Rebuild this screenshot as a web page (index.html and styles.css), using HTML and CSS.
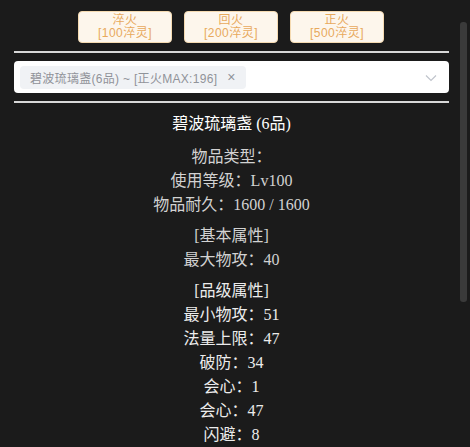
FILE: index.html
```html
<!DOCTYPE html>
<html>
<head>
<meta charset="utf-8">
<link rel="stylesheet" href="styles.css">
</head>
<body>
<div class="page">
  <div class="btns">
    <div class="btn"><span>淬火</span><span>[100淬灵]</span></div>
    <div class="btn"><span>回火</span><span>[200淬灵]</span></div>
    <div class="btn"><span>正火</span><span>[500淬灵]</span></div>
  </div>
  <div class="rule"></div>
  <div class="select">
    <div class="tag"><span>碧波琉璃盏(6品) ~ [正火MAX:196]</span><span class="x">×</span></div>
    <svg class="chev" width="12" height="8" viewBox="0 0 12 8"><path d="M1 1.5 L6 6.5 L11 1.5" fill="none" stroke="#c0c4cc" stroke-width="1.2"/></svg>
  </div>
  <div class="rule"></div>
  <div class="info">
    <div class="title">碧波琉璃盏 (6品)</div>
    <div class="sec">
      <div>物品类型：</div>
      <div>使用等级：Lv100</div>
      <div>物品耐久：1600 / 1600</div>
    </div>
    <div class="sec">
      <div>[基本属性]</div>
      <div>最大物攻：40</div>
    </div>
    <div class="sec bright">
      <div>[品级属性]</div>
      <div>最小物攻：51</div>
      <div>法量上限：47</div>
      <div>破防：34</div>
      <div>会心：1</div>
      <div>会心：47</div>
      <div>闪避：8</div>
    </div>
  </div>
</div>
<div class="scrollbar"></div>
</body>
</html>
```
FILE: styles.css
```css
html, body {
  margin: 0;
  padding: 0;
  background: #1b1b1b;
  height: 100%;
  overflow: hidden;
}
body {
  font-family: "Liberation Serif", "Noto Sans CJK SC", serif;
  color: #d2d2d2;
}
.page {
  width: 435px;
  margin-left: 14px;
  padding-top: 11px;
}
.btns {
  display: flex;
  justify-content: center;
  gap: 12px;
  margin-left: -1px;
}
.btn {
  width: 92px;
  height: 30px;
  background: #fdf6ec;
  border: 1px solid #f5dab1;
  border-radius: 4px;
  color: #e8a95c;
  font-family: "Liberation Sans", "Noto Sans CJK SC", sans-serif;
  font-size: 12px;
  letter-spacing: 0.5px;
  line-height: 13px;
  display: flex;
  flex-direction: column;
  align-items: center;
  justify-content: center;
}
.btn span {
  display: block;
  height: 13px;
  line-height: 13px;
}
.rule {
  height: 2px;
  background: #d8d8d8;
  margin-top: 8px;
}
.select {
  margin-top: 8px;
  height: 32px;
  background: #fff;
  border-radius: 4px;
  display: flex;
  align-items: center;
  position: relative;
  padding-left: 6px;
}
.tag {
  height: 23px;
  background: #f0f2f5;
  border-radius: 4px;
  color: #909399;
  font-family: "Liberation Sans", "Noto Sans CJK SC", sans-serif;
  font-size: 12px;
  letter-spacing: 0.3px;
  display: flex;
  align-items: center;
  padding: 0 10px 0 10px;
  gap: 10px;
}
.tag .x {
  font-size: 14px;
  color: #909399;
}
.chev {
  position: absolute;
  right: 12px;
  top: 13px;
}
.info {
  margin-top: 9px;
  text-align: center;
  font-size: 16px;
  line-height: 24px;
}
.title {
  color: #ffffff;
}
.sec {
  margin-top: 9px;
}
.sec + .sec {
  margin-top: 7px;
}
.bright {
  color: #ececec;
}
.scrollbar {
  position: absolute;
  left: 460px;
  top: 22px;
  width: 7px;
  height: 280px;
  background: #3a3a3a;
  border-radius: 3px;
}
```
